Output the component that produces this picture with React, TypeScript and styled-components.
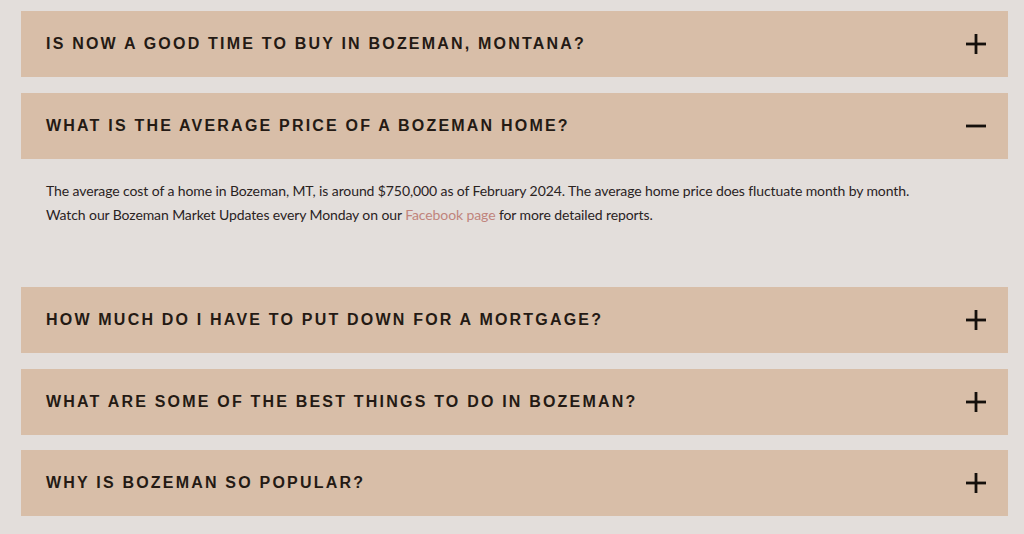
import { ReactElement, useState } from "react";
import styled, { createGlobalStyle } from "styled-components";

const GlobalStyle = createGlobalStyle`
  html, body {
    margin: 0;
    padding: 0;
    background: #e3dedb;
  }
`;

type Faq = { question: string; answer?: () => ReactElement };

const faqs: Faq[] = [
  { question: "IS NOW A GOOD TIME TO BUY IN BOZEMAN, MONTANA?" },
  {
    question: "WHAT IS THE AVERAGE PRICE OF A BOZEMAN HOME?",
    answer: () => (
      <>
        The average cost of a home in Bozeman, MT, is around $750,000 as of February 2024. The
        average home price does fluctuate month by month.
        <br />
        Watch our Bozeman Market Updates every Monday on our{" "}
        <StyledLink href="#">Facebook page</StyledLink> for more detailed reports.
      </>
    ),
  },
  { question: "HOW MUCH DO I HAVE TO PUT DOWN FOR A MORTGAGE?" },
  { question: "WHAT ARE SOME OF THE BEST THINGS TO DO IN BOZEMAN?" },
  { question: "WHY IS BOZEMAN SO POPULAR?" },
];

export default function App(): ReactElement {
  const [open, setOpen] = useState<number>(1);

  return (
    <>
      <GlobalStyle />
      <StyledPage>
        {faqs.map((faq, i) => (
          <StyledItem key={faq.question}>
            <StyledHeader onClick={() => setOpen((state) => (state === i ? -1 : i))}>
              <StyledQuestion>{faq.question}</StyledQuestion>
              <ToggleIcon open={open === i} />
            </StyledHeader>
            {open === i && faq.answer && <StyledAnswer>{faq.answer()}</StyledAnswer>}
          </StyledItem>
        ))}
      </StyledPage>
    </>
  );
}

function ToggleIcon({ open }: { open: boolean }): ReactElement {
  return (
    <StyledIcon viewBox="0 0 20 20" aria-hidden>
      <path d="M0 10h20" />
      {!open && <path d="M10 0v20" />}
    </StyledIcon>
  );
}

const StyledPage = styled.div`
  display: flex;
  flex-direction: column;
  gap: 15.5px;
  padding: 11px 16px 0 21px;
`;

const StyledItem = styled.section`
  display: flex;
  flex-direction: column;
`;

const StyledHeader = styled.button`
  display: flex;
  align-items: center;
  justify-content: space-between;
  height: 66px;
  padding: 0 22px 0 25px;
  border: none;
  background: #d8bea8;
  cursor: pointer;
  text-align: left;
`;

const StyledQuestion = styled.span`
  font-family: "Liberation Sans", Arial, sans-serif;
  font-weight: 700;
  font-size: 16px;
  letter-spacing: 2.2px;
  color: #241a14;
`;

const StyledIcon = styled.svg`
  width: 20px;
  height: 20px;
  stroke: #15100c;
  stroke-width: 2.8px;
  fill: none;
`;

const StyledAnswer = styled.div`
  padding: 20px 25px 45px;
  font-family: Lato, "Open Sans", sans-serif;
  font-size: 14px;
  letter-spacing: -0.1px;
  line-height: 24px;
  color: #2a231f;
`;

const StyledLink = styled.a`
  color: #c0847c;
  text-decoration: none;
`;
